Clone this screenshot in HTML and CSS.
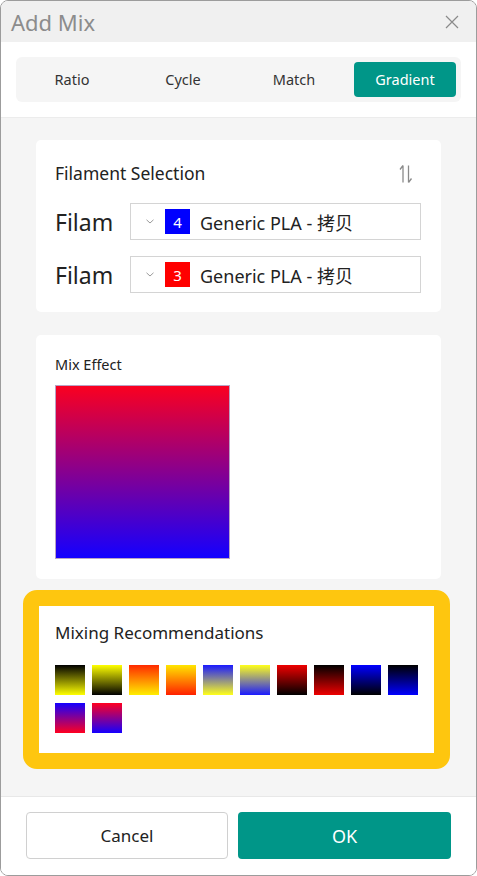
FILE: index.html
```html
<!DOCTYPE html>
<html>
<head>
<meta charset="utf-8">
<link rel="stylesheet" href="styles.css">
</head>
<body>
<div class="window">
  <div class="titlebar">
    <span class="title">Add Mix</span>
    <svg class="close" width="14" height="14" viewBox="0 0 14 14"><path d="M1 1 L13 13 M13 1 L1 13" stroke="#8a8a8a" stroke-width="1.2" fill="none"/></svg>
  </div>
  <div class="tabs-section">
    <div class="tabs">
      <div class="tab">Ratio</div>
      <div class="tab">Cycle</div>
      <div class="tab">Match</div>
      <div class="tab active">Gradient</div>
    </div>
  </div>
  <div class="content">
    <div class="card card-filament">
      <div class="card-head">
        <span class="card-title">Filament Selection</span>
        <svg class="swap" width="14" height="20" viewBox="0 0 14 20"><path d="M4 1.5 V18.5 M4 1.5 L1 5.5 M9.5 1.5 V18.5 M9.5 18.5 L12.5 14.5" stroke="#8a8a8a" stroke-width="1.3" fill="none"/></svg>
      </div>
      <div class="frow">
        <span class="flabel">Filam</span>
        <div class="combo">
          <svg class="chev" width="8" height="5" viewBox="0 0 8 5"><path d="M0.5 0.8 L4 4 L7.5 0.8" stroke="#9a9a9a" stroke-width="1" fill="none"/></svg>
          <span class="chip blue">4</span>
          <span class="ctext">Generic PLA - 拷贝</span>
        </div>
      </div>
      <div class="frow">
        <span class="flabel">Filam</span>
        <div class="combo">
          <svg class="chev" width="8" height="5" viewBox="0 0 8 5"><path d="M0.5 0.8 L4 4 L7.5 0.8" stroke="#9a9a9a" stroke-width="1" fill="none"/></svg>
          <span class="chip red">3</span>
          <span class="ctext">Generic PLA - 拷贝</span>
        </div>
      </div>
    </div>
    <div class="card card-effect">
      <div class="effect-title">Mix Effect</div>
      <div class="effect-box"></div>
    </div>
    <div class="highlight">
      <div class="rec-title">Mixing Recommendations</div>
      <div class="swatches">
        <span class="sw s1"></span>
        <span class="sw s2"></span>
        <span class="sw s3"></span>
        <span class="sw s4"></span>
        <span class="sw s5"></span>
        <span class="sw s6"></span>
        <span class="sw s7"></span>
        <span class="sw s8"></span>
        <span class="sw s9"></span>
        <span class="sw s10"></span>
        <span class="sw s11"></span>
        <span class="sw s12"></span>
      </div>
    </div>
  </div>
  <div class="footer">
    <button class="btn cancel">Cancel</button>
    <button class="btn ok">OK</button>
  </div>
</div>
</body>
</html>
```

FILE: styles.css
```css
* { box-sizing: border-box; }
html, body { margin: 0; padding: 0; background: #ffffff; }
body { font-family: "Noto Sans", "Noto Sans CJK SC", sans-serif; color: #222; }

.window {
  width: 477px;
  height: 876px;
  border: 1px solid #9c9c9c;
  border-radius: 8px;
  overflow: hidden;
  display: flex;
  flex-direction: column;
  background: #fff;
}

.titlebar {
  height: 41px;
  background: #f0f0f0;
  display: flex;
  align-items: center;
  justify-content: space-between;
  padding: 0 17px 0 10px;
}
.title { font-size: 22px; color: #8c8c8c; line-height: 1; }

.tabs-section {
  height: 76px;
  padding: 15px 15px 0 15px;
  border-bottom: 1px solid #ececec;
}
.tabs {
  height: 45px;
  background: #f5f5f5;
  border-radius: 6px;
  padding: 5px;
  display: flex;
  gap: 9px;
}
.tab {
  flex: 1;
  display: flex;
  align-items: center;
  justify-content: center;
  font-size: 14.5px;
  color: #333;
  border-radius: 4px;
  padding-bottom: 1px;
}
.tab.active { background: #009688; color: #fff; }

.content {
  flex: 1;
  background: #f5f5f5;
  padding: 22px 35px 0 35px;
}
.card {
  background: #fff;
  border-radius: 5px;
}
.card-filament {
  height: 172px;
  padding: 20px 19px 0 19px;
}
.card-head {
  display: flex;
  justify-content: space-between;
  align-items: center;
  height: 26px;
  margin-bottom: 17px;
  margin-right: 9px;
}
.card-title { font-size: 17.5px; color: #222; }
.swap { margin-top: 2px; }

.frow {
  display: flex;
  align-items: center;
  height: 37px;
  margin-bottom: 16px;
}
.flabel {
  width: 75px;
  flex-shrink: 0;
  font-size: 23px;
  color: #222;
}
.combo {
  width: 291px;
  flex-shrink: 0;
  height: 37px;
  border: 1px solid #d4d4d4;
  display: flex;
  align-items: center;
  padding-left: 15px;
}
.chev { margin-right: 11px; }
.chip {
  width: 25px;
  height: 25px;
  display: flex;
  align-items: center;
  justify-content: center;
  color: #fff;
  font-size: 15px;
  margin-right: 10px;
}
.chip.blue { background: #0000ff; }
.chip.red { background: #ff0000; }
.ctext { font-size: 18px; color: #222; }

.card-effect {
  margin-top: 23px;
  height: 244px;
  padding: 19px 19px 0 19px;
}
.effect-title { font-size: 14.5px; color: #222; height: 20px; line-height: 20px; margin-bottom: 11px; }
.effect-box {
  width: 175px;
  height: 174px;
  border: 1px solid #b9a3c4;
  background: linear-gradient(#fa0020, #1400ff);
}

.highlight {
  margin-top: 11px;
  margin-left: -13px;
  width: 427px;
  height: 179px;
  border: 16px solid #fec60f;
  border-radius: 14px;
  background: #fff;
  padding: 15px 14px 0 16px;
}
.rec-title { font-size: 17px; color: #222; height: 24px; line-height: 24px; margin-bottom: 20px; }
.swatches {
  display: flex;
  flex-wrap: wrap;
  gap: 8px 7px;
}
.sw { width: 30px; height: 30px; display: block; }
.s1 { background: linear-gradient(#000000, #ffff00); }
.s2 { background: linear-gradient(#ffff00, #000000); }
.s3 { background: linear-gradient(#ff2a00, #ffee00); }
.s4 { background: linear-gradient(#ffe600, #ff2000); }
.s5 { background: linear-gradient(#1a1aff, #ffff1a); }
.s6 { background: linear-gradient(#ffff1a, #1a1aff); }
.s7 { background: linear-gradient(#ee0000, #000000); }
.s8 { background: linear-gradient(#000000, #ee0000); }
.s9 { background: linear-gradient(#0000ff, #000000); }
.s10 { background: linear-gradient(#000000, #0000ff); }
.s11 { background: linear-gradient(#1400ff, #ff0020); }
.s12 { background: linear-gradient(#ff0020, #1400ff); }

.footer {
  height: 79px;
  border-top: 1px solid #e8e8e8;
  padding: 15px 0 0 25px;
  display: flex;
  align-items: flex-start;
  gap: 10px;
  background: #fff;
}
.btn {
  height: 47px;
  border-radius: 4px;
  font-family: "Noto Sans", sans-serif;
  font-size: 17px;
  cursor: pointer;
}
.cancel {
  width: 202px;
  background: #fff;
  border: 1px solid #d0d0d0;
  color: #222;
}
.ok {
  width: 213px;
  background: #009688;
  border: none;
  color: #fff;
  font-size: 18px;
}
```
